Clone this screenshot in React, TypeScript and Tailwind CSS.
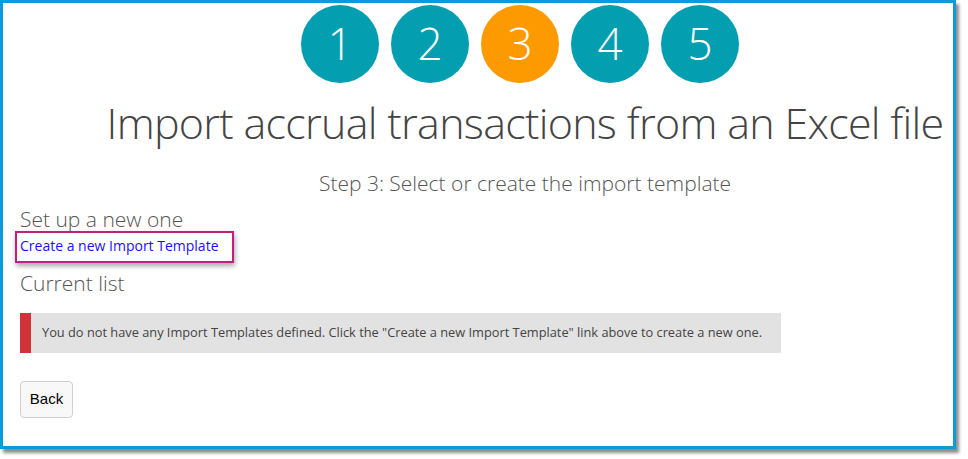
import React from 'react'

const steps = [1, 2, 3, 4, 5]
const current = 3

function StepBubble({ n }: { n: number }) {
  const active = n === current
  return (
    <div
      className={
        'w-[78px] h-[78px] rounded-full flex items-center justify-center text-white text-[44px] font-light leading-none ' +
        (active ? 'bg-[#fd9a01]' : 'bg-[#039eb0]')
      }
    >
      <span className="-mt-[2px]">{n}</span>
    </div>
  )
}

export default function App() {
  return (
    <div className="w-[968px] h-[459px] bg-white" style={{ fontFamily: '"Open Sans", "Noto Sans", sans-serif' }}>
      <div className="w-[956px] h-[449px] border-[3px] border-[#0b9bd8] shadow-[3px_4px_3px_rgba(0,0,0,0.45)] overflow-hidden">
        {/* wizard header */}
        <div className="ml-[82px] w-[880px] pt-[2px]">
          <div className="flex justify-center gap-[12px] pr-[10px]">
            {steps.map((n) => (
              <StepBubble key={n} n={n} />
            ))}
          </div>
          <h1 className="mt-[12px] text-center text-[43px] font-light text-[#444] leading-[56px] whitespace-nowrap tracking-[-0.7px]">
            Import accrual transactions from an Excel file
          </h1>
          <p className="mt-[18px] text-center text-[21px] font-light text-[#555] leading-[28px]">
            Step 3: Select or create the import template
          </p>
        </div>

        {/* template section */}
        <div className="pl-[17px] pt-[8px]">
          <h3 className="text-[21px] font-light text-[#555] leading-[28px]">Set up a new one</h3>
          <div className="-ml-[5px] -mt-[2px] w-[219px] h-[32px] border-2 border-[#c2207f] shadow-[1px_3px_5px_rgba(0,0,0,0.35)] flex items-center pl-[3px]">
            <a href="#" className="text-[14px] text-[#1c0fff] leading-none -mt-[2px]">
              Create a new Import Template
            </a>
          </div>
          <h3 className="mt-[6px] text-[21px] font-light text-[#555] leading-[28px]">Current list</h3>

          <div className="mt-[16px] w-[761px] h-[40px] bg-[#e2e2e2] flex items-center">
            <div className="w-[11px] h-full bg-[#d0343a]" />
            <span className="ml-[11px] text-[12.8px] text-[#444]">
              You do not have any Import Templates defined. Click the "Create a new Import Template" link above to create a new one.
            </span>
          </div>

          <button
            className="mt-[28px] w-[53px] h-[37px] rounded-[4px] border border-[#cfcfcf] bg-[#f8f8f8] text-[15px] text-black"
            style={{ fontFamily: '"Liberation Sans", Arial, sans-serif' }}
          >
            Back
          </button>
        </div>
      </div>
    </div>
  )
}
